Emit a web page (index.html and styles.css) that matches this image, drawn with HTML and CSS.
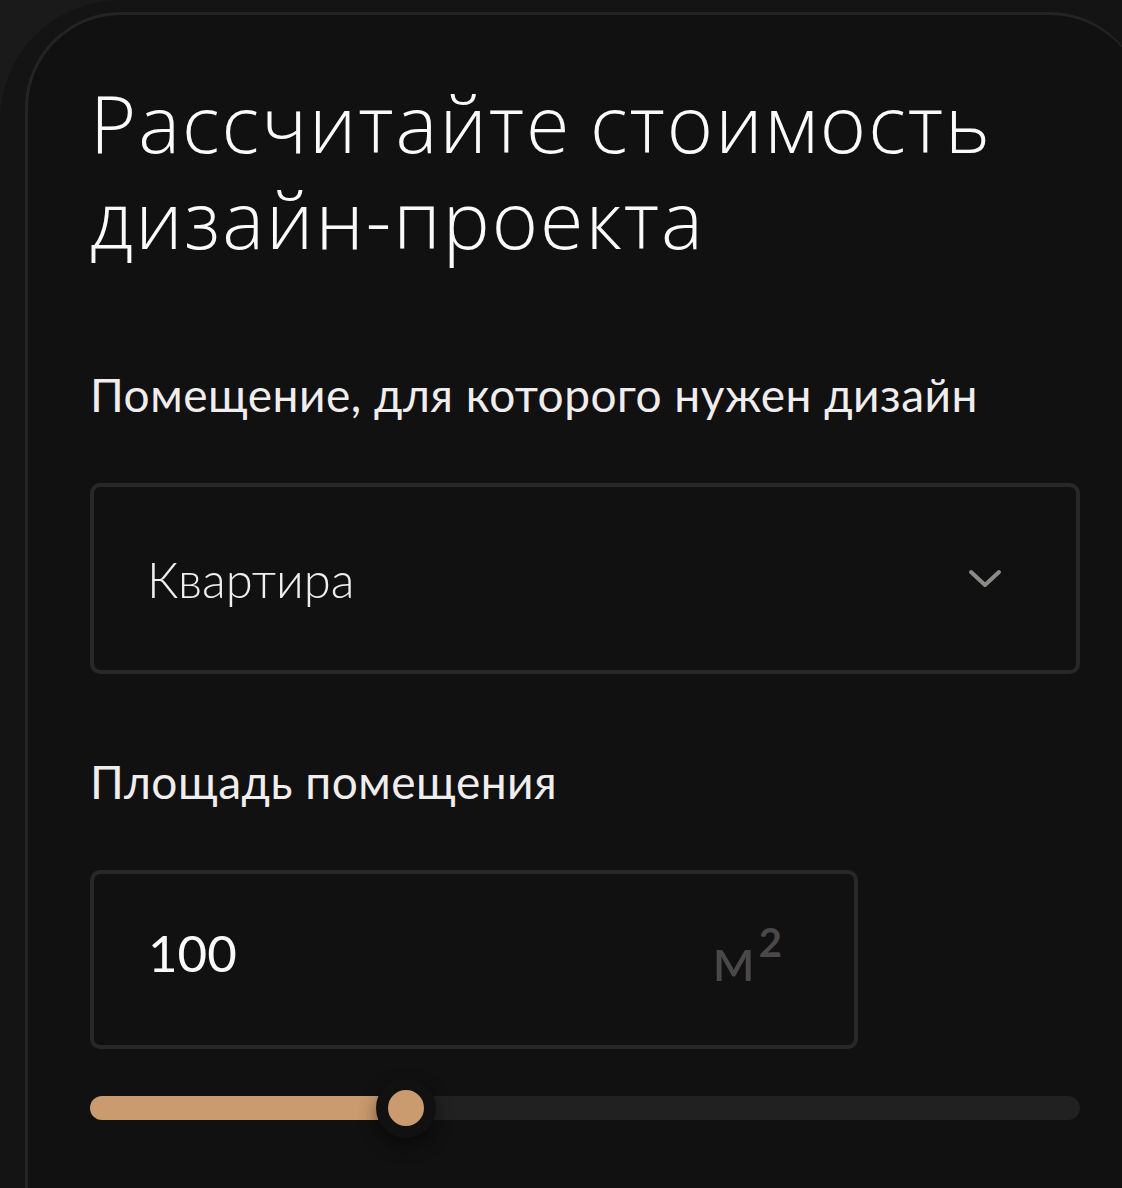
FILE: index.html
```html
<!DOCTYPE html>
<html>
<head>
    <title>Калькулятор дизайн-проекта</title>
    <link rel="stylesheet" href="styles.css">
</head>
<body>
    <div class="backdrop">
        <div class="card">
            <h1 class="title">Рассчитайте стоимость дизайн-проекта</h1>

            <div class="label">Помещение, для которого нужен дизайн</div>
            <div class="select">
                <span class="select-value">Квартира</span>
                <svg class="chevron" width="34" height="20" viewBox="0 0 34 20">
                    <path d="M3 3 L17 16 L31 3" fill="none" stroke="#8e8a8a" stroke-width="4" stroke-linecap="round" stroke-linejoin="round"/>
                </svg>
            </div>

            <div class="label label-area">Площадь помещения</div>
            <div class="area-input">
                <span class="area-value">100</span>
                <span class="unit">м<sup>2</sup></span>
            </div>

            <div class="slider">
                <div class="slider-fill" style="width: 316px"></div>
                <div class="slider-thumb" style="left: 316px"></div>
            </div>
        </div>
    </div>
</body>
</html>
```

FILE: styles.css
```css
html, body { margin: 0; padding: 0; }
body { background: #1b1a1a; overflow: hidden; height: 1188px; }

.backdrop { background: #151414; border-radius: 120px 0 0 0; height: 1188px; padding-top: 12px; padding-left: 25px; box-sizing: border-box; overflow: hidden; }

.card {
    width: 1120px;
    height: 1300px;
    box-sizing: border-box;
    background: #121112;
    border: 3px solid #252424;
    border-right: none;
    border-bottom: none;
    border-radius: 96px 96px 0 0;
    padding: 60px 65px 0 62px;
}

.title {
    margin: 0;
    font-family: "Open Sans", "Liberation Sans", sans-serif;
    font-weight: 300;
    font-size: 79px;
    line-height: 96px;
    color: #fbfafa;
    letter-spacing: 2px;
    word-spacing: -4px;
    width: 990px;
}

.label {
    font-family: "Lato", "Liberation Sans", sans-serif;
    font-size: 46px;
    line-height: 56px;
    color: #efeded;
    margin-top: 100px;
    letter-spacing: 0.5px;
}
.label-area { margin-top: 80px; }

.select {
    margin-top: 60px;
    height: 191px;
    box-sizing: border-box;
    border: 4px solid #292828;
    border-radius: 10px;
    display: flex;
    align-items: center;
    justify-content: space-between;
    padding: 0 74px 0 53px;
}
.select-value {
    font-family: "Lato", "Liberation Sans", sans-serif;
    font-weight: 300;
    font-size: 49px;
    color: #efeded;
}

.area-input {
    margin-top: 60px;
    width: 768px;
    height: 179px;
    box-sizing: border-box;
    border: 4px solid #292828;
    border-radius: 10px;
    display: flex;
    align-items: center;
    justify-content: space-between;
    padding: 0 72px 14px 54px;
}
.area-value {
    font-family: "Lato", "Liberation Sans", sans-serif;
    font-size: 51px;
    color: #fbfafa;
}
.unit {
    font-family: "Lato", "Liberation Sans", sans-serif;
    font-size: 60px;
    color: #4a4848;
    margin-top: 6px;
}
.unit sup { font-size: 40px; font-weight: 700; vertical-align: 24px; margin-left: 4px; }

.slider {
    position: relative;
    margin-top: 47px;
    height: 24px;
    border-radius: 12px;
    background: #222121;
}
.slider-fill {
    height: 24px;
    border-radius: 12px 0 0 12px;
    background: #c99b6e;
}
.slider-thumb {
    position: absolute;
    top: -18px;
    width: 36px;
    height: 36px;
    margin-left: -30px;
    border-radius: 50%;
    background: #c99b6e;
    border: 12px solid #121112;
    box-shadow: 0 8px 18px rgba(0, 0, 0, 0.45);
}
```
